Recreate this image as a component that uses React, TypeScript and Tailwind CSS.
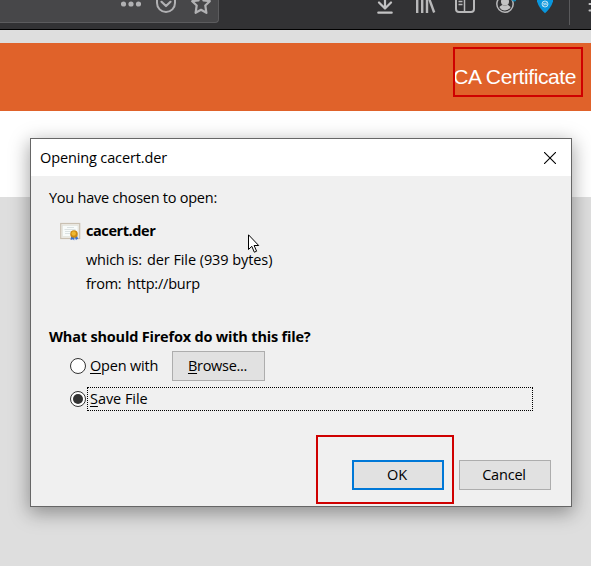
import React from "react";

function AddressBarIcons() {
  return (
    <>
      <svg className="ml-[121px] h-3.5 w-5 shrink-0" viewBox="121 0 20 14" fill="#b1b1b3">
        <circle cx="123.5" cy="4" r="2.6" />
        <circle cx="131" cy="4" r="2.6" />
        <circle cx="138.5" cy="4" r="2.6" />
      </svg>
      <svg className="ml-[15px] h-3.5 w-5 shrink-0" viewBox="156 0 20 14" fill="none" stroke="#b1b1b3" strokeWidth="2" strokeLinecap="round" strokeLinejoin="round">
        <path d="M157 -5V3a9 9 0 0 0 18 0V-5" />
        <path d="M161.5 1.8L166 6l4.500-4.200" strokeWidth="2.200" />
      </svg>
      <svg className="ml-[15px] h-[15px] w-5 shrink-0" viewBox="191 0 20 15" fill="none" stroke="#b1b1b3" strokeWidth="2.200" strokeLinejoin="round">
        <path d="M201-5l2.600 5.500 6.200.7-4.500 4.300 1.100 7.300-5.400-3-5.400 3 1.100-7.300-4.500-4.300 6.200-.7z" />
      </svg>
    </>
  );
}

function ToolbarIcons() {
  return (
    <>
      <svg className="ml-[158px] h-3.5 w-4 shrink-0" viewBox="377 0 16 14" fill="none" stroke="#c3c3c4" strokeWidth="2.200" strokeLinecap="round" strokeLinejoin="round">
        <path d="M385-4V8M379 2.500l6 6 6-6M378.300 12.700h13.400" />
      </svg>
      <svg className="ml-[23px] h-3.5 w-5 shrink-0" viewBox="416 0 20 14" fill="none" stroke="#b8b8b9" strokeWidth="2.400">
        <path d="M417.200-4V13M422.200-4V13M427-4V13" />
        <path d="M428.500-3l5.700 15.500" />
      </svg>
      <svg className="ml-[19px] h-3.5 w-5 shrink-0" viewBox="455 0 20 14" fill="none" stroke="#b8b8b9" strokeWidth="2">
        <rect x="456" y="-6" width="18" height="18" rx="3" />
        <path d="M464.500-6V12M458.500 1.500h4M458.500 4.500h4" strokeWidth="1.500" />
      </svg>
      <svg className="ml-[21px] h-3.5 w-5 shrink-0" viewBox="496 0 20 14">
        <circle cx="505" cy="4" r="8.200" fill="none" stroke="#b8b8b9" strokeWidth="1.500" />
        <circle cx="505" cy="1.500" r="4" fill="#c3c3c4" />
        <path d="M499.300 7q2-2 3.500-2 2 1 4.400 0 1.500 0 3.500 2-2 3.500-5.700 3.500T499.300 7z" fill="#c3c3c4" />
        <circle cx="514.300" cy="-1" r="2.500" fill="#168bb8" />
      </svg>
      <svg className="ml-5 h-3.5 w-[18px] shrink-0" viewBox="536 0 18 14">
        <path d="M537-2h16v3.500Q551 8 545 13.200 539 8 537 1.500z" fill="#0996dd" />
        <circle cx="545" cy="4" r="3" fill="#2aa3e0" stroke="#c3e5f5" strokeWidth=".9" />
        <path d="M542.500 3l5 2M543 5.500l4-3" stroke="#c3e5f5" strokeWidth=".7" />
      </svg>
      <div className="ml-[15px] h-[25px] w-px shrink-0 bg-[#5a5a5c]" />
      <svg className="ml-[18px] h-3.5 w-[3px] shrink-0" viewBox="588 0 3 14" stroke="#c3c3c4" strokeWidth="2" strokeLinecap="round">
        <path d="M589.500 4H593M589.500 10.500H593" />
      </svg>
    </>
  );
}

function CertificateIcon() {
  return (
    <svg className="h-5 w-[21px] shrink-0" viewBox="0 0 21 20">
      <rect x=".7" y="2.500" width="19" height="15" fill="#eeece5" stroke="#c9c0b2" strokeWidth="1.200" />
      <rect x="2.500" y="4.500" width="15.500" height="11" fill="#f8fbfa" stroke="#dedfd9" strokeWidth=".6" />
      <path d="M7 6.500h7M4.500 8.500h11M5 10.500h6M5 12.500h5" stroke="#c8d1d1" strokeWidth=".6" />
      <path d="M11.500 14l-1 5 2.500-.7 1.200 1.200.3-4.500 1.500 4.300 1-1.200 1.200.2-1.700-5z" fill="#3970ce" />
      <circle cx="14" cy="13" r="3.800" fill="#cb8912" />
      <circle cx="13.700" cy="12.500" r="2.200" fill="#efb82f" />
    </svg>
  );
}

function Dialog() {
  return (
    <section className="absolute left-[30px] top-[138px] flex h-[369px] w-[542px] flex-col border border-[#666] bg-[#f0f0f0] text-[14.5px] leading-5 text-black shadow-[0_5px_18px_1px_rgba(0,0,0,0.36)]">
      <header className="flex h-[37px] shrink-0 items-center justify-between bg-white pl-[9px] pr-[15px]">
        <h1 className="whitespace-nowrap tracking-[-0.13px]">Opening cacert.der</h1>
        <svg className="h-3 w-3" viewBox="0 0 12 12" stroke="#000" strokeWidth="1.100">
          <path d="M0 0l12 12M12 0L0 12" />
        </svg>
      </header>
      <div className="flex flex-col whitespace-nowrap pl-[18px] pt-3">
        <p className="tracking-[-0.25px]">You have chosen to open:</p>
        <div className="ml-[11px] mt-[13px] flex h-5 items-center gap-[5px]">
          <CertificateIcon />
          <strong className="tracking-[-0.42px]">cacert.der</strong>
        </div>
        <div className="ml-[37px] mt-[9px] flex h-5 gap-[5px]">
          <span className="w-14 tracking-[-0.22px]">which is:</span>
          <span className="tracking-[-0.08px]">der File (939 bytes)</span>
        </div>
        <div className="ml-[37px] mt-1 flex h-5 gap-[5px]">
          <span className="w-9 tracking-[-0.3px]">from:</span>
          <span className="tracking-[-0.2px]">http://burp</span>
        </div>
        <h2 className="mt-[33px] font-bold tracking-[-0.19px]">What should Firefox do with this file?</h2>
        <div className="ml-[21px] mt-1 flex h-[30px] items-center">
          <span className="h-4 w-4 rounded-full border border-[#333] bg-white" />
          <label className="ml-1 w-[82px] tracking-[-0.2px]"><u className="underline-offset-2">O</u>pen with</label>
          <button className="h-[30px] w-[93px] border border-[#adadad] bg-[#e1e1e1] pr-0.5 tracking-[-0.3px]"><u className="underline-offset-2">B</u>rowse...</button>
        </div>
        <div className="ml-[21px] mt-1.5 flex h-6 items-center">
          <span className="flex h-4 w-4 items-center justify-center rounded-full border border-[#333] bg-white"><span className="h-2.5 w-2.5 rounded-full bg-[#333]" /></span>
          <label className="ml-px flex h-6 w-[446px] items-center border border-dotted border-black pl-0.5"><span className="tracking-[-0.05px]"><u className="underline-offset-2">S</u>ave File</span></label>
        </div>
      </div>
      <footer className="mt-auto flex gap-[15px] pb-4 pl-[321px]">
        <button className="h-[30px] w-[92px] border-2 border-[#0078d7] bg-[#e1e1e1] pr-0.5 tracking-[-0.2px]">OK</button>
        <button className="h-[30px] w-[92px] border border-[#adadad] bg-[#e1e1e1] pr-0.5 tracking-[-0.2px]">Cancel</button>
      </footer>
    </section>
  );
}

export default function App() {
  return (
    <main className="relative h-[566px] w-[591px] overflow-hidden bg-[#dedede] font-['Open_Sans','Noto_Sans',sans-serif]">
      <div className="flex h-[30px] items-start border-b border-black bg-[#323234]">
        <div className="flex h-[23px] w-[219px] shrink-0 rounded-br-sm border-b border-r border-[#5c5c5e] bg-[#474749]">
          <AddressBarIcons />
        </div>
        <ToolbarIcons />
      </div>
      <div className="mt-[13px] flex h-[68px] items-center justify-end bg-[#e0622a] pr-[15px] font-['Liberation_Sans',Arial,sans-serif] text-[21px] text-white">
        <span className="whitespace-nowrap tracking-[-0.4px]">CA Certificate</span>
      </div>
      <div className="h-[86px] bg-white" />
      <Dialog />
      <div className="absolute left-[453px] top-[47px] h-[50px] w-[130px] border-2 border-[#cf0000]" />
      <div className="absolute left-[316px] top-[435px] h-[69px] w-[138px] border-2 border-[#cf0000]" />
      <svg className="absolute left-[248px] top-[234px] h-5 w-3" viewBox="0 0 12 20">
        <path d="M.5.800V15.500l3.300-3.200 2.500 5.900 2.300-1-2.500-5.700h4.600z" fill="#fff" stroke="#000" />
      </svg>
    </main>
  );
}
